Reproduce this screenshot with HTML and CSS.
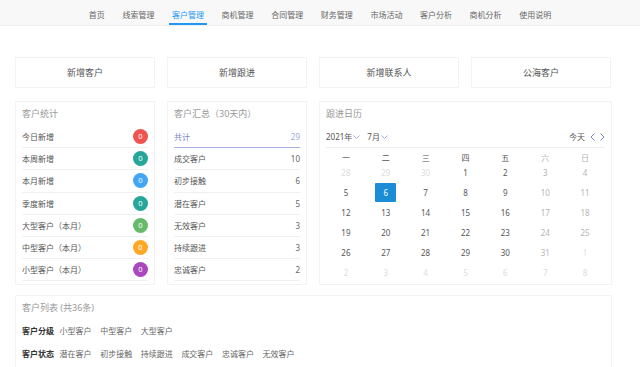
FILE: index.html
```html
<!DOCTYPE html>
<html lang="zh-CN">
<head>
  <meta charset="UTF-8">
  <meta name="viewport" content="width=device-width, initial-scale=1.0">
  <title>客户管理</title>
  <link rel="stylesheet" href="styles.css">
</head>
<body>
  <nav class="topnav">
    <a href="#">首页</a>
    <a href="#">线索管理</a>
    <a href="#" class="active">客户管理</a>
    <a href="#">商机管理</a>
    <a href="#">合同管理</a>
    <a href="#">财务管理</a>
    <a href="#">市场活动</a>
    <a href="#">客户分析</a>
    <a href="#">商机分析</a>
    <a href="#">使用说明</a>
  </nav>

  <main class="page">
    <div class="quick-actions">
      <a href="#" class="quick-btn">新增客户</a>
      <a href="#" class="quick-btn">新增跟进</a>
      <a href="#" class="quick-btn">新增联系人</a>
      <a href="#" class="quick-btn">公海客户</a>
    </div>

    <div class="dashboard">
      <!-- 客户统计 -->
      <section class="card">
        <h2 class="card-title">客户统计</h2>
        <div class="stat-row"><span>今日新增</span><span class="badge red">0</span></div>
        <div class="stat-row"><span>本周新增</span><span class="badge teal">0</span></div>
        <div class="stat-row"><span>本月新增</span><span class="badge blue">0</span></div>
        <div class="stat-row"><span>季度新增</span><span class="badge teal">0</span></div>
        <div class="stat-row"><span>大型客户（本月）</span><span class="badge green">0</span></div>
        <div class="stat-row"><span>中型客户（本月）</span><span class="badge orange">0</span></div>
        <div class="stat-row"><span>小型客户（本月）</span><span class="badge purple">0</span></div>
      </section>

      <!-- 客户汇总 -->
      <section class="card">
        <h2 class="card-title">客户汇总（30天内）</h2>
        <div class="stat-row total"><span>共计</span><span>29</span></div>
        <div class="stat-row"><span>成交客户</span><span class="num">10</span></div>
        <div class="stat-row"><span>初步接触</span><span class="num">6</span></div>
        <div class="stat-row"><span>潜在客户</span><span class="num">5</span></div>
        <div class="stat-row"><span>无效客户</span><span class="num">3</span></div>
        <div class="stat-row"><span>持续跟进</span><span class="num">3</span></div>
        <div class="stat-row"><span>忠诚客户</span><span class="num">2</span></div>
      </section>

      <!-- 跟进日历 -->
      <section class="card">
        <h2 class="card-title">跟进日历</h2>
        <div class="cal-toolbar">
          <div class="cal-select">
            <span>2021年<svg class="chev" viewBox="0 0 7 4"><path d="M0.5 0.5 L3.5 3.5 L6.5 0.5"/></svg></span>
            <span>7月<svg class="chev" viewBox="0 0 7 4"><path d="M0.5 0.5 L3.5 3.5 L6.5 0.5"/></svg></span>
          </div>
          <div class="cal-nav">
            <span>今天</span>
            <svg class="arrow" viewBox="0 0 5 8"><path d="M4.5 0.5 L1 4 L4.5 7.5"/></svg>
            <svg class="arrow" viewBox="0 0 5 8"><path d="M0.5 0.5 L4 4 L0.5 7.5"/></svg>
          </div>
        </div>
        <div class="cal-grid cal-head">
          <span>一</span><span>二</span><span>三</span><span>四</span><span>五</span><span class="weekend">六</span><span class="weekend">日</span>
        </div>
        <div class="cal-grid cal-days">
          <span class="other">28</span><span class="other">29</span><span class="other">30</span><span>1</span><span>2</span><span class="weekend">3</span><span class="weekend">4</span>
          <span>5</span><span><b class="today">6</b></span><span>7</span><span>8</span><span>9</span><span class="weekend">10</span><span class="weekend">11</span>
          <span>12</span><span>13</span><span>14</span><span>15</span><span>16</span><span class="weekend">17</span><span class="weekend">18</span>
          <span>19</span><span>20</span><span>21</span><span>22</span><span>23</span><span class="weekend">24</span><span class="weekend">25</span>
          <span>26</span><span>27</span><span>28</span><span>29</span><span>30</span><span class="weekend">31</span><span class="other">1</span>
          <span class="other">2</span><span class="other">3</span><span class="other">4</span><span class="other">5</span><span class="other">6</span><span class="other">7</span><span class="other">8</span>
        </div>
      </section>
    </div>

    <!-- 客户列表 -->
    <section class="card customer-list">
      <h2 class="card-title">客户列表 (共36条)</h2>
      <div class="filter-row">
        <strong>客户分级</strong>
        <a href="#">小型客户</a><a href="#">中型客户</a><a href="#">大型客户</a>
      </div>
      <div class="filter-row">
        <strong>客户状态</strong>
        <a href="#">潜在客户</a><a href="#">初步接触</a><a href="#">持续跟进</a><a href="#">成交客户</a><a href="#">忠诚客户</a><a href="#">无效客户</a>
      </div>
    </section>
  </main>
</body>
</html>
```

FILE: styles.css
```css
/* Reset */
* {
  box-sizing: border-box;
  margin: 0;
  padding: 0;
}

body {
  font-family: "Noto Sans", "Noto Sans CJK SC", sans-serif;
  font-size: 8px;
  color: #555;
  background: #fff;
  overflow: hidden;
}

a {
  color: inherit;
  text-decoration: none;
}

/* Navigation */
.topnav {
  display: flex;
  justify-content: center;
  gap: 11.6px;
  height: 26px;
  background: #f8f8f8;
  border-bottom: 1px solid #ededed;
}
.topnav a {
  display: block;
  padding: 6px 3px 0;
  line-height: 17px;
  border-bottom: 2px solid transparent;
  color: #666;
}
.topnav a.active {
  color: #2196f3;
  border-bottom-color: #2196f3;
}

/* Page */
.page {
  padding: 31px 28px 0 15px;
}

.quick-actions {
  display: grid;
  grid-template-columns: repeat(4, 140px);
  gap: 12px;
}
.quick-btn {
  display: block;
  height: 31px;
  line-height: 29px;
  text-align: center;
  font-size: 9px;
  color: #555;
  border: 1px solid #f3f3f3;
}

.dashboard {
  display: grid;
  grid-template-columns: 140px 140px 1fr;
  gap: 12px;
  margin-top: 13px;
  height: 184px;
}

/* Card */
.card {
  border: 1px solid #f3f3f3;
  padding: 0 6px;
  background: #fff;
}
.card-title {
  font-size: 9px;
  font-weight: normal;
  color: #999;
  height: 24px;
  line-height: 24px;
}

.stat-row {
  display: flex;
  justify-content: space-between;
  align-items: center;
  height: 22.2px;
  border-bottom: 1px solid #f0f0f0;
}
.stat-row.total {
  color: #7986cb;
  border-bottom-color: #a9b0dc;
}
.stat-row.total span:last-child {
  color: #9fa8da;
}
.stat-row .num {
  color: #666;
}

.badge {
  width: 15px;
  height: 15px;
  line-height: 15px;
  border-radius: 50%;
  text-align: center;
  color: #fff;
  font-size: 7.5px;
}
.badge.red { background: #ef5350; }
.badge.teal { background: #26a69a; }
.badge.blue { background: #42a5f5; }
.badge.green { background: #66bb6a; }
.badge.orange { background: #ffa726; }
.badge.purple { background: #ab47bc; }

/* Calendar */
.cal-toolbar {
  display: flex;
  justify-content: space-between;
  align-items: center;
  height: 22px;
  border-bottom: 1px solid #ededed;
  color: #555;
}
.cal-select {
  display: flex;
  gap: 7px;
}
.chev {
  width: 7px;
  height: 4px;
  margin: 0 0 1px 1px;
  fill: none;
  stroke: #9fa8da;
  stroke-width: 1;
}
.cal-nav {
  display: flex;
  align-items: center;
  gap: 5px;
}
.cal-nav .arrow {
  width: 5px;
  height: 8px;
  fill: none;
  stroke: #7986cb;
  stroke-width: 1;
}

.cal-grid {
  display: grid;
  grid-template-columns: repeat(7, 1fr);
  text-align: center;
}
.cal-head span {
  height: 15px;
  padding-top: 5px;
  line-height: 10px;
  color: #555;
}
.cal-days span {
  height: 20px;
  line-height: 20px;
  color: #555;
}
.cal-grid .weekend {
  color: #b5b5b5;
}
.cal-grid .other {
  color: #dcdcdc;
}
.today {
  display: inline-block;
  width: 21px;
  height: 19px;
  line-height: 19px;
  font-weight: normal;
  color: #fff;
  background: #1b8cd6;
  border-radius: 1px;
}

/* Customer list */
.customer-list {
  margin-top: 10px;
  height: 80px;
}
.customer-list .card-title {
  height: 23px;
  line-height: 23px;
}
.filter-row {
  display: flex;
  gap: 8.6px;
  height: 23px;
  line-height: 23px;
  color: #666;
}
.filter-row strong {
  color: #333;
  margin-right: -3px;
}
```
